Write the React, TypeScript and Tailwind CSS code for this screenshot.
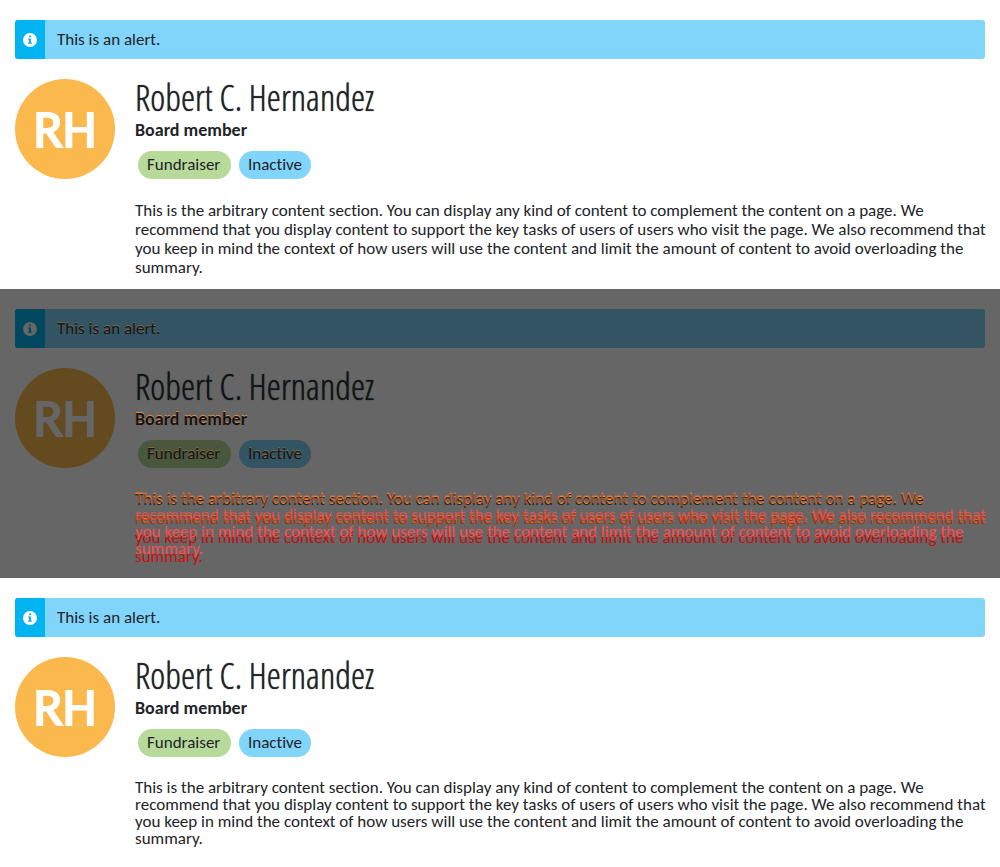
import React from "react";

type Mode = "before" | "diff" | "after";

const LINES = [
  "This is the arbitrary content section. You can display any kind of content to complement the content on a page. We",
  "recommend that you display content to support the key tasks of users of users who visit the page. We also recommend that",
  "you keep in mind the context of how users will use the content and limit the amount of content to avoid overloading the",
  "summary.",
];

function Lines({ colors }: { colors?: string[] }) {
  return (
    <>
      {LINES.map((line, i) => (
        <span key={line} className={`block whitespace-nowrap ${colors ? colors[i] : ""}`}>
          {line}{" "}
        </span>
      ))}
    </>
  );
}

function InfoIcon({ diff }: { diff: boolean }) {
  return (
    <svg viewBox="0 0 14 14" className="size-[14px]" aria-hidden="true">
      <circle cx="7" cy="7" r="7" fill={diff ? "#666666" : "#ffffff"} />
      <path
        d="M6.1 2.6h1.8v1.6H6.1zM5.1 5.5h2.8v4h.9v1.2H5.1V9.5H6V6.7h-.9z"
        fill={diff ? "#00485f" : "#00b4f1"}
      />
    </svg>
  );
}

function Summary({ mode }: { mode: Mode }) {
  const diff = mode === "diff";
  const thin = diff ? "[text-shadow:0_-1px_0_#b87030a0]" : "";
  return (
    <section
      className={`flex min-h-[289px] flex-col gap-5 overflow-hidden px-[15px] pt-5 ${
        diff ? "bg-[#666666] text-[#111316]" : "bg-white text-[#212327]"
      }`}
    >
      <div
        role="status"
        className={`flex h-[39px] items-stretch overflow-hidden rounded-[3px] ${
          diff ? "bg-[#335463]" : "bg-[#81d4fa]"
        }`}
      >
        <span
          className={`flex w-[30px] shrink-0 items-center justify-center ${
            diff ? "bg-[#00485f]" : "bg-[#00b4f1]"
          }`}
        >
          <InfoIcon diff={diff} />
        </span>
        <span className={`flex items-center px-3 ${thin}`}>This is an alert.</span>
      </div>
      <div className="flex gap-5">
        <div
          className={`flex size-[100px] shrink-0 items-center justify-center rounded-full text-[54px] leading-none [-webkit-text-stroke:2px_currentColor] ${
            diff ? "bg-[#644a1f] text-[#666666]" : "bg-[#fbb84c] text-white"
          }`}
        >
          RH
        </div>
        <div className="min-w-0 flex-1">
          <h1
            className={`h-10 font-['Open_Sans_Condensed_Light','Open_Sans_Condensed',sans-serif] text-[36px] leading-[38px] font-light whitespace-nowrap ${
              diff ? "[text-shadow:0_0_1px_#111316]" : "[text-shadow:0_0_1px_#212327]"
            }`}
          >
            Robert C. Hernandez
          </h1>
          <p
            className={`text-[18px] leading-[22px] font-bold ${
              diff ? "[text-shadow:0_-1px_0_#e08c3c]" : ""
            }`}
          >
            Board member
          </p>
          <div className="mt-[10px] flex gap-2 pl-[3px]">
            <span
              className={`flex h-7 w-[93px] items-center rounded-full px-[9px] ${thin} ${
                diff ? "bg-[#49573d]" : "bg-[#b7da9b]"
              }`}
            >
              Fundraiser
            </span>
            <span
              className={`flex h-7 w-[72px] items-center justify-center rounded-full ${thin} ${
                diff ? "bg-[#335463]" : "bg-[#81d4fa]"
              }`}
            >
              Inactive
            </span>
          </div>
          <div className="relative mt-[22px]">
            <p className={mode === "after" ? "leading-[17px]" : "leading-[19px]"}>
              <Lines
                colors={
                  diff
                    ? [
                        "text-[#30221c] [text-shadow:0_-1px_0_#e08c3c]",
                        "text-[#a83010] [text-shadow:0_-1px_0_#d07828]",
                        "text-[#c01010]",
                        "text-[#cc0f0f]",
                      ]
                    : undefined
                }
              />
            </p>
            {diff && (
              <p aria-hidden="true" className="absolute inset-x-0 -top-px leading-[17px]">
                <Lines
                  colors={[
                    "text-[#f0682c90]",
                    "text-[#ff4c4cc0]",
                    "text-[#ff4c4c]",
                    "text-[#ff4c4c]",
                  ]}
                />
              </p>
            )}
          </div>
        </div>
      </div>
    </section>
  );
}

export default function App() {
  return (
    <main className="font-['Carlito','Lato',sans-serif] text-[17px] leading-5 [font-variant-ligatures:none]">
      <Summary mode="before" />
      <Summary mode="diff" />
      <Summary mode="after" />
    </main>
  );
}
